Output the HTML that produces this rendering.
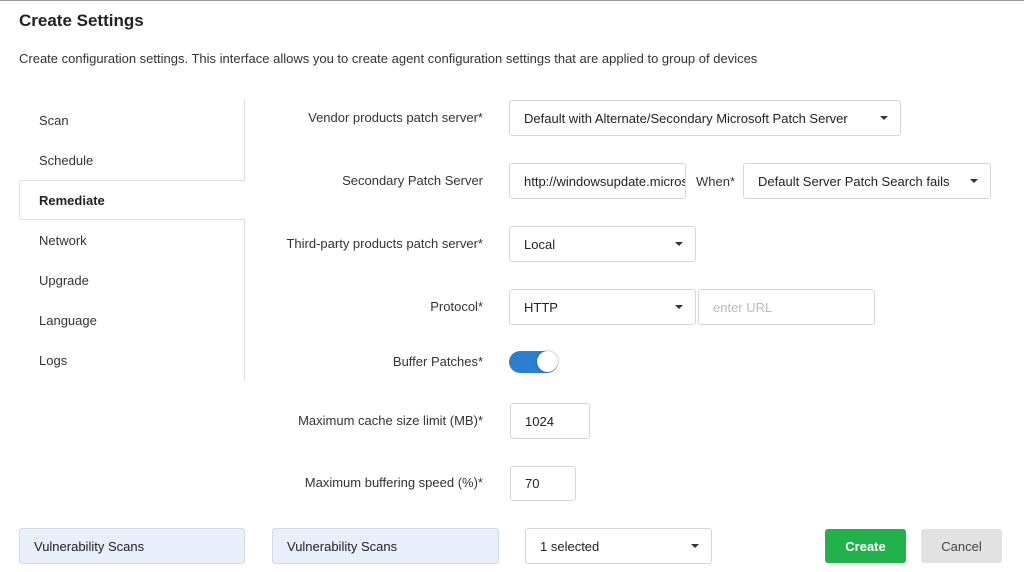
<!DOCTYPE html>
<html><head><meta charset="utf-8"><style>
body{margin:0;width:1024px;height:572px;background:#fff;font-family:"Liberation Sans",sans-serif;color:#333;position:relative;overflow:hidden;border-top:1px solid #999;box-sizing:border-box}
.a{position:absolute}
.t{font-size:13px;line-height:16px}
.lbl{position:absolute;right:541px;font-size:13px;color:#333;white-space:nowrap}
.box{position:absolute;border:1px solid #d6d6d6;border-radius:3px;box-sizing:border-box;font-size:13px;color:#222;padding-left:14px;display:flex;align-items:center;background:#fff;overflow:hidden;white-space:nowrap}
.car{position:absolute;right:12px;top:50%;margin-top:-2px;border-left:4px solid transparent;border-right:4px solid transparent;border-top:4px solid #333}
.nav{position:absolute;left:39px;font-size:13px;color:#333}
</style></head><body>
<div class="a" style="left:19px;top:10px;font-size:17px;font-weight:bold;color:#222">Create Settings</div>
<div class="a t" style="left:19px;top:50px;color:#333">Create configuration settings. This interface allows you to create agent configuration settings that are applied to group of devices</div>

<div class="a" style="left:244px;top:98px;width:1px;height:82px;background:#ddd"></div>
<div class="a" style="left:244px;top:219px;width:1px;height:161px;background:#ddd"></div>
<div class="a" style="left:19px;top:179px;width:226px;height:40px;border:1px solid #ddd;border-right:none;border-radius:3px 0 0 3px;box-sizing:border-box"></div>
<div class="nav" style="top:112px">Scan</div>
<div class="nav" style="top:152px">Schedule</div>
<div class="nav" style="top:192px;font-weight:bold;color:#222">Remediate</div>
<div class="nav" style="top:232px">Network</div>
<div class="nav" style="top:272px">Upgrade</div>
<div class="nav" style="top:312px">Language</div>
<div class="nav" style="top:352px">Logs</div>

<div class="lbl" style="top:109px">Vendor products patch server*</div>
<div class="box" style="left:509px;top:99px;width:392px;height:36px">Default with Alternate/Secondary Microsoft Patch Server<span class="car"></span></div>

<div class="lbl" style="top:172px">Secondary Patch Server</div>
<div class="box" style="left:509px;top:162px;width:177px;height:36px">http://windowsupdate.microsoft.com</div>
<div class="a t" style="left:696px;top:173px">When*</div>
<div class="box" style="left:743px;top:162px;width:248px;height:36px">Default Server Patch Search fails<span class="car"></span></div>

<div class="lbl" style="top:235px">Third-party products patch server*</div>
<div class="box" style="left:509px;top:225px;width:187px;height:36px">Local<span class="car"></span></div>

<div class="lbl" style="top:298px">Protocol*</div>
<div class="box" style="left:509px;top:288px;width:187px;height:36px">HTTP<span class="car"></span></div>
<div class="box" style="left:698px;top:288px;width:177px;height:36px;color:#bbb">enter URL</div>

<div class="lbl" style="top:353px">Buffer Patches*</div>
<div class="a" style="left:509px;top:350px;width:49px;height:22px;border-radius:11px;background:#2a7fd0"></div>
<div class="a" style="left:537px;top:350px;width:21px;height:21px;border-radius:50%;background:#fff;box-shadow:0 0 2px rgba(0,0,0,.4)"></div>

<div class="lbl" style="top:412px">Maximum cache size limit (MB)*</div>
<div class="box" style="left:510px;top:402px;width:80px;height:36px">1024</div>
<div class="lbl" style="top:474px">Maximum buffering speed (%)*</div>
<div class="box" style="left:510px;top:465px;width:66px;height:35px">70</div>

<div class="box" style="left:19px;top:527px;width:226px;height:36px;background:#e8eefa;border-color:#d3dbe8">Vulnerability Scans</div>
<div class="box" style="left:272px;top:527px;width:227px;height:36px;background:#e8eefa;border-color:#d3dbe8">Vulnerability Scans</div>
<div class="box" style="left:525px;top:527px;width:187px;height:36px">1 selected<span class="car"></span></div>
<div class="a" style="left:825px;top:528px;width:81px;height:34px;background:#22b24c;border-radius:3px;color:#fff;font-size:13px;font-weight:bold;display:flex;align-items:center;justify-content:center">Create</div>
<div class="a" style="left:921px;top:528px;width:81px;height:34px;background:#e2e2e2;border-radius:3px;color:#444;font-size:13px;display:flex;align-items:center;justify-content:center">Cancel</div>
</body></html>
